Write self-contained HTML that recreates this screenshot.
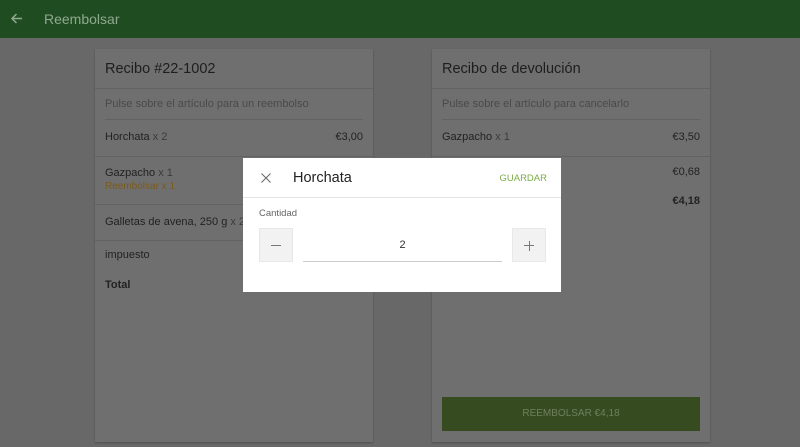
<!DOCTYPE html>
<html><head><meta charset="utf-8"><style>
*{margin:0;padding:0;box-sizing:border-box}
body{width:800px;height:447px;overflow:hidden;background:#686868;font-family:"Liberation Sans",sans-serif;position:relative}
.hdr{position:absolute;left:0;top:0;width:800px;height:38px;background:#1f4c21}
.hdr .t{position:absolute;left:44px;top:11px;font-size:14px;color:#8fa88f}
.card{position:absolute;top:49px;width:278px;height:393px;background:#6f6f6f;box-shadow:0 1px 2px rgba(0,0,0,.25)}
.a{position:absolute;font-size:11px;color:#222;white-space:nowrap}
.g{color:#3c3c3c}
.line{position:absolute;height:1px;background:#626262}
.dlg{position:absolute;left:243px;top:158px;width:318px;height:134px;background:#fff}
.btn{position:absolute;top:70px;width:34px;height:34px;background:#f2f2f2;border:1px solid #e8e8e8}
</style></head><body>
<div class="hdr">
<svg style="position:absolute;left:10px;top:12px" width="13" height="13" viewBox="0 0 13 13"><path d="M12 6.5H2M6.5 2L2 6.5 6.5 11" stroke="#8fa88f" stroke-width="1.5" fill="none"/></svg>
<div class="t">Reembolsar</div></div>

<div class="card" style="left:95px">
<div class="a" style="left:10px;top:12px;font-size:14.5px;color:#1e1e1e">Recibo #22-1002</div>
<div class="line" style="left:0;right:0;top:39px"></div>
<div class="a" style="left:10px;top:49px;color:#4a4a4a;font-size:11px">Pulse sobre el artículo para un reembolso</div>
<div class="line" style="left:10px;right:10px;top:70px"></div>
<div class="a" style="left:10px;top:82px">Horchata <span class="g">x 2</span></div>
<div class="a" style="right:10px;top:82px">€3,00</div>
<div class="line" style="left:0;right:0;top:107px"></div>
<div class="a" style="left:10px;top:118px">Gazpacho <span class="g">x 1</span></div>
<div class="a" style="left:10px;top:132px;color:#7a5a1e;font-size:10px">Reembolsar x 1</div>
<div class="line" style="left:0;right:0;top:155px"></div>
<div class="a" style="left:10px;top:167px">Galletas de avena, 250 g <span class="g">x 2</span></div>
<div class="line" style="left:0;right:0;top:191px"></div>
<div class="a" style="left:10px;top:200px">impuesto</div>
<div class="a" style="left:10px;top:230px;font-weight:bold">Total</div>
</div>

<div class="card" style="left:432px">
<div class="a" style="left:10px;top:12px;font-size:14.5px;color:#1e1e1e">Recibo de devolución</div>
<div class="line" style="left:0;right:0;top:39px"></div>
<div class="a" style="left:10px;top:49px;color:#4a4a4a;font-size:11px">Pulse sobre el artículo para cancelarlo</div>
<div class="line" style="left:10px;right:10px;top:70px"></div>
<div class="a" style="left:10px;top:82px">Gazpacho <span class="g">x 1</span></div>
<div class="a" style="right:10px;top:82px">€3,50</div>
<div class="line" style="left:0;right:0;top:107px"></div>
<div class="a" style="right:10px;top:117px">€0,68</div>
<div class="a" style="right:10px;top:146px;font-weight:bold">€4,18</div>
<div style="position:absolute;left:10px;top:348px;width:258px;height:34px;background:#364b1f;color:#6f7f5f;font-size:10px;text-align:center;line-height:34px">REEMBOLSAR €4,18</div>
</div>

<div class="dlg">
<svg style="position:absolute;left:18px;top:15px" width="10" height="10" viewBox="0 0 10 10"><path d="M0.5 0.5L9.5 9.5M9.5 0.5L0.5 9.5" stroke="#666" stroke-width="1"/></svg>
<div class="a" style="left:50px;top:12px;font-size:14.5px;color:#222">Horchata</div>
<div class="a" style="right:14px;top:15px;font-size:9.5px;color:#7cac48">GUARDAR</div>
<div class="line" style="left:0;right:0;top:39px;background:#e4e4e4"></div>
<div class="a" style="left:16px;top:50px;font-size:9.5px;color:#666">Cantidad</div>
<div class="btn" style="left:16px"><div style="position:absolute;left:11px;top:16px;width:10px;height:1px;background:#777"></div></div>
<div class="a" style="left:60px;width:199px;top:81px;text-align:center;color:#333">2</div>
<div class="line" style="left:60px;width:199px;top:103px;background:#ccc"></div>
<div class="btn" style="left:269px"><div style="position:absolute;left:11px;top:16px;width:10px;height:1px;background:#777"></div><div style="position:absolute;left:15.5px;top:11.5px;width:1px;height:10px;background:#777"></div></div>
</div>
</body></html>
